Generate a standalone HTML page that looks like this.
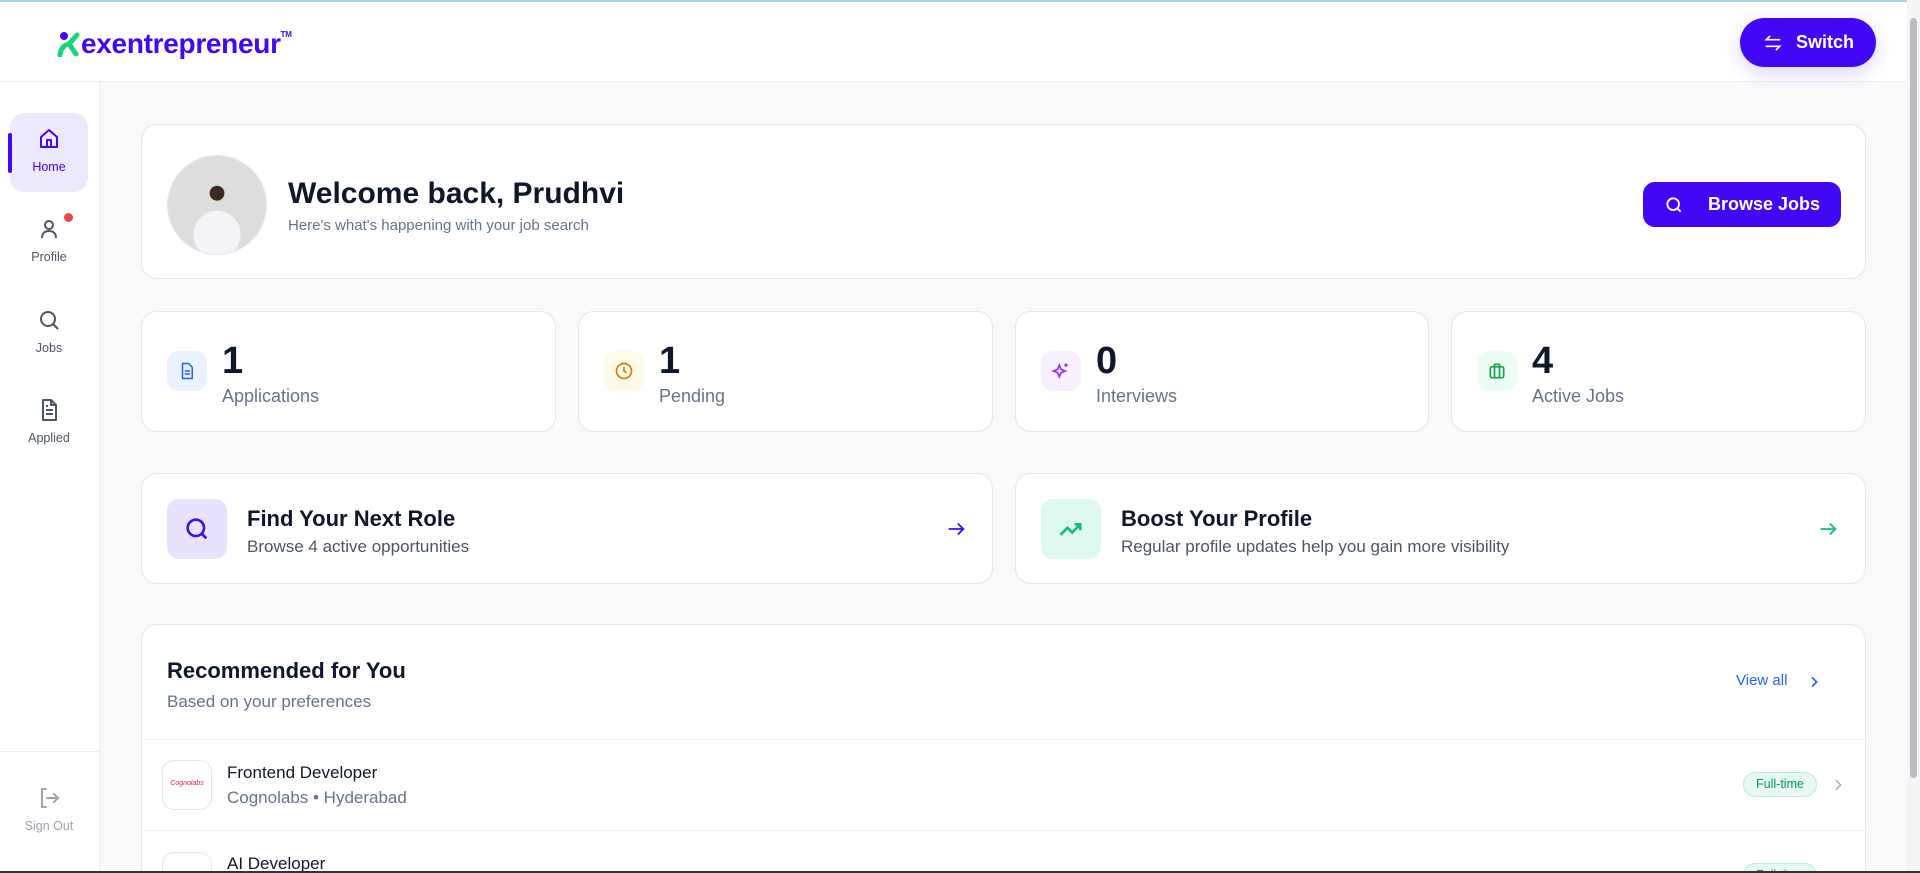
<!DOCTYPE html>
<html style="width:1920px;height:873px;overflow:hidden"><head><meta charset="utf-8"><style>
*{box-sizing:border-box;margin:0;padding:0}
body{width:1920px;height:873px;overflow:hidden;font-family:"Liberation Sans",sans-serif;background:#f8f9fb;position:relative;color:#0f172a}
.abs{position:absolute}
.top{left:0;top:0;width:1907px;height:82px;background:#fff;border-top:2px solid #a9d3d9;border-bottom:1px solid #eceef2}
.side{left:0;top:82px;width:100px;height:791px;background:#fff;border-right:1px solid #eceef2}
.nav{position:absolute;left:10px;width:78px;text-align:center;font-size:12.5px;color:#4b5563}
.card{position:absolute;background:#fff;border:1px solid #e5e7eb;border-radius:16px}
.btn{position:absolute;background:#4208f5;color:#fff;font-weight:bold;display:flex;align-items:center;justify-content:center}
.num{position:absolute;left:80px;top:30px;font-size:38px;font-weight:bold;color:#0f172a;line-height:38px}
.lab{position:absolute;left:80px;top:74px;font-size:18px;color:#64748b}
.ib{position:absolute;left:25px;top:39px;width:40px;height:40px;border-radius:12px;display:flex;align-items:center;justify-content:center}
.t1{position:absolute;left:105px;top:32px;font-size:22px;font-weight:bold}
.t2{position:absolute;left:105px;top:63px;font-size:17px;color:#4b5563}
</style></head><body>
<div class="abs top"></div>
<div class="abs" style="left:57px;top:28px;font-size:28px;font-weight:bold;color:#4208f5;letter-spacing:-0.3px">
<svg width="24" height="26" viewBox="0 0 24 26" style="vertical-align:-4px;margin-right:0px"><circle cx="7" cy="5" r="4" fill="#4208f5"/><path d="M3 24 C4 16 8 14 12 13 L20 4" stroke="#19d27a" stroke-width="5" fill="none" stroke-linecap="round"/><path d="M12 13 L19 23" stroke="#19d27a" stroke-width="5" fill="none" stroke-linecap="round"/></svg>exentrepreneur<sup style="font-size:8px;vertical-align:16px">TM</sup></div>
<div class="btn" style="left:1740px;top:18px;width:136px;height:49px;border-radius:25px;font-size:18px;box-shadow:0 6px 18px rgba(66,8,245,.18)">
<svg width="22" height="20" viewBox="0 0 24 24" fill="none" stroke="#fff" stroke-width="2" stroke-linecap="round" style="margin-right:12px"><path d="M20 8H4l4-4M4 16h16l-4 4"/></svg>Switch</div>
<div class="abs side"></div>
<div class="abs" style="left:0;top:751px;width:100px;height:1px;background:#eceef2"></div>
<div class="abs" style="left:10px;top:113px;width:78px;height:79px;background:#ece8fe;border-radius:14px"></div>
<div class="abs" style="left:8px;top:133px;width:4px;height:40px;background:#4208f5;border-radius:2px"></div>
<div class="nav" style="top:127px;color:#4208f5"><svg width="24" height="24" viewBox="0 0 24 24" fill="none" stroke="#4208f5" stroke-width="2" stroke-linejoin="round"><path d="M4 10l8-7 8 7v10H4z"/><path d="M10 20v-7h4v7"/></svg><div style="margin-top:6px">Home</div></div>
<div class="nav" style="top:217px"><svg width="24" height="24" viewBox="0 0 24 24" fill="none" stroke="#4b5563" stroke-width="2"><circle cx="12" cy="8" r="4"/><path d="M5 21c0-5 3-7 7-7s7 2 7 7"/></svg><div style="margin-top:6px">Profile</div></div>
<div class="abs" style="left:64px;top:213px;width:9px;height:9px;background:#ef4444;border-radius:50%"></div>
<div class="nav" style="top:308px"><svg width="24" height="24" viewBox="0 0 24 24" fill="none" stroke="#4b5563" stroke-width="2"><circle cx="11" cy="11" r="7"/><path d="M16 16l5 5"/></svg><div style="margin-top:6px">Jobs</div></div>
<div class="nav" style="top:398px"><svg width="24" height="24" viewBox="0 0 24 24" fill="none" stroke="#4b5563" stroke-width="2" stroke-linejoin="round"><path d="M6 2h8l5 5v15H6z"/><path d="M14 2v5h5M9 12h7M9 16h7M9 8h2"/></svg><div style="margin-top:6px">Applied</div></div>
<div class="nav" style="top:786px;color:#9ca3af"><svg width="24" height="24" viewBox="0 0 24 24" fill="none" stroke="#9ca3af" stroke-width="2" stroke-linecap="round"><path d="M9 3H5v18h4M10 12h11M17 8l4 4-4 4"/></svg><div style="margin-top:6px">Sign Out</div></div>

<div class="card" style="left:141px;top:124px;width:1725px;height:155px">
<div class="abs" style="left:25px;top:30px;width:100px;height:100px;border-radius:50%;background:radial-gradient(circle at 50% 80%,#f3f4f8 0 25%,transparent 26%),radial-gradient(circle at 50% 38%,#3a2a22 0 9%,transparent 10%),#dcdedc;border:1px solid #e5e7eb"></div>
<div class="abs" style="left:146px;top:52px;font-size:30px;font-weight:bold;color:#0f172a">Welcome back, Prudhvi</div>
<div class="abs" style="left:146px;top:92px;font-size:15px;color:#64748b">Here's what's happening with your job search</div>
</div>
<div class="btn" style="left:1643px;top:182px;width:198px;height:45px;border-radius:12px;font-size:18px"><svg width="20" height="20" viewBox="0 0 24 24" fill="none" stroke="#fff" stroke-width="2.2"><circle cx="11" cy="11" r="7"/><path d="M16 16l4 4"/></svg><span style="margin-left:24px">Browse Jobs</span></div>

<div class="card" style="left:141px;top:311px;width:415px;height:121px"><div class="ib" style="background:#eaf2ff"><svg width="18" height="18" viewBox="0 0 24 24" fill="none" stroke="#2563eb" stroke-width="2"><path d="M6 2h8l5 5v15H6z"/><path d="M9 12h7M9 16h7"/></svg></div><div class="num">1</div><div class="lab">Applications</div></div>
<div class="card" style="left:578px;top:311px;width:415px;height:121px"><div class="ib" style="background:#fefae8"><svg width="20" height="20" viewBox="0 0 24 24" fill="none" stroke="#d97706" stroke-width="2"><circle cx="12" cy="12" r="9"/><path d="M12 7v5l3 2"/></svg></div><div class="num">1</div><div class="lab">Pending</div></div>
<div class="card" style="left:1015px;top:311px;width:414px;height:121px"><div class="ib" style="background:#f8f0ff"><svg width="20" height="20" viewBox="0 0 24 24" fill="none" stroke="#9333ea" stroke-width="2"><path d="M10 5l2 5 5 2-5 2-2 5-2-5-5-2 5-2z"/><path d="M18 3v4M16 5h4"/></svg></div><div class="num">0</div><div class="lab">Interviews</div></div>
<div class="card" style="left:1451px;top:311px;width:415px;height:121px"><div class="ib" style="background:#ecfdf3"><svg width="20" height="20" viewBox="0 0 24 24" fill="none" stroke="#16a34a" stroke-width="2"><rect x="4" y="7" width="16" height="13" rx="2"/><path d="M9 7V4h6v3M9 7v13M15 7v13"/></svg></div><div class="num">4</div><div class="lab">Active Jobs</div></div>

<div class="card" style="left:141px;top:473px;width:852px;height:111px"><div class="abs" style="left:25px;top:25px;width:60px;height:60px;border-radius:12px;background:#e8e2fe;display:flex;align-items:center;justify-content:center"><svg width="28" height="28" viewBox="0 0 24 24" fill="none" stroke="#4208f5" stroke-width="2.2"><circle cx="11" cy="11" r="7"/><path d="M16 16l4 4"/></svg></div><div class="t1">Find Your Next Role</div><div class="t2">Browse 4 active opportunities</div><svg class="abs" style="left:803px;top:44px" width="22" height="22" viewBox="0 0 24 24" fill="none" stroke="#4208f5" stroke-width="2"><path d="M4 12h16M14 6l6 6-6 6"/></svg></div>
<div class="card" style="left:1015px;top:473px;width:851px;height:111px"><div class="abs" style="left:25px;top:25px;width:60px;height:60px;border-radius:12px;background:#defaee;display:flex;align-items:center;justify-content:center"><svg width="28" height="28" viewBox="0 0 24 24" fill="none" stroke="#10b981" stroke-width="2.2"><path d="M3 17l6-6 4 4 7-7M15 8h5v5"/></svg></div><div class="t1">Boost Your Profile</div><div class="t2">Regular profile updates help you gain more visibility</div><svg class="abs" style="left:801px;top:44px" width="22" height="22" viewBox="0 0 24 24" fill="none" stroke="#10b981" stroke-width="2"><path d="M4 12h16M14 6l6 6-6 6"/></svg></div>

<div class="card" style="left:141px;top:624px;width:1725px;height:249px;overflow:hidden;border-bottom:none;border-radius:16px 16px 0 0">
<div class="abs" style="left:25px;top:33px;font-size:22px;font-weight:bold">Recommended for You</div>
<div class="abs" style="left:25px;top:67px;font-size:17px;color:#64748b">Based on your preferences</div>
<div class="abs" style="left:1594px;top:47px;font-size:15px;color:#2563eb">View all</div>
<svg class="abs" style="left:1664px;top:48px" width="16" height="18" viewBox="0 0 24 24" fill="none" stroke="#2563eb" stroke-width="2.5"><path d="M9 5l7 7-7 7"/></svg>
<div class="abs" style="left:0;top:114px;width:100%;height:1px;background:#eef0f3"></div>
<div class="abs" style="left:20px;top:135px;width:50px;height:50px;border:1px solid #e5e7eb;border-radius:12px;font-size:7px;color:#e11d48;padding-top:19px;text-align:center;font-style:italic">Cognolabs</div>
<div class="abs" style="left:85px;top:138px;font-size:17px">Frontend Developer</div>
<div class="abs" style="left:85px;top:163px;font-size:17px;color:#64748b">Cognolabs • Hyderabad</div>
<div class="abs" style="left:1601px;top:147px;width:74px;height:25px;border-radius:13px;background:#e6f8ef;border:1px solid #bdebd3;color:#059669;font-size:12.5px;text-align:center;line-height:23px">Full-time</div>
<svg class="abs" style="left:1688px;top:151px" width="16" height="18" viewBox="0 0 24 24" fill="none" stroke="#9ca3af" stroke-width="2"><path d="M9 5l7 7-7 7"/></svg>
<div class="abs" style="left:0;top:205px;width:100%;height:1px;background:#eef0f3"></div>
<div class="abs" style="left:20px;top:227px;width:50px;height:50px;border:1px solid #e5e7eb;border-radius:12px"></div>
<div class="abs" style="left:85px;top:229px;font-size:17px">AI Developer</div>
<div class="abs" style="left:1601px;top:238px;width:74px;height:25px;border-radius:13px;background:#e6f8ef;border:1px solid #bdebd3;color:#059669;font-size:12.5px;text-align:center;line-height:23px">Full-time</div>
</div>
<div class="abs" style="left:1907px;top:0;width:13px;height:873px;background:#f4f4f6"></div>
<div class="abs" style="left:1910px;top:18px;width:7px;height:760px;background:#bcbbc0;border-radius:4px"></div>
<div class="abs" style="left:0;top:871px;width:1920px;height:2px;background:#333"></div>
</body></html>
